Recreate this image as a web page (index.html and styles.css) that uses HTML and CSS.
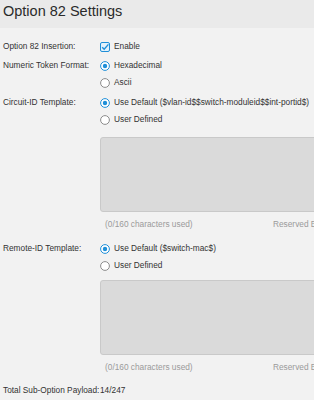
FILE: index.html
```html
<!DOCTYPE html>
<html lang="en">
<head>
  <meta charset="UTF-8" />
  <meta name="viewport" content="width=device-width, initial-scale=1.0"/>
  <title>Option 82 Settings</title>
  <link rel="stylesheet" href="styles.css">
</head>
<body>
  <header class="page-head">
    <h1>Option 82 Settings</h1>
  </header>

  <main class="form">
    <div class="row row-first">
      <span class="label">Option 82 Insertion:</span>
      <div class="ctrl">
        <label class="opt">
          <svg class="box" viewBox="0 0 10 10"><rect x="0.5" y="0.5" width="9" height="9" rx="1.5" fill="#e3f1fb" stroke="#1f8fd8"/><path d="M2.2 5.2 L4.2 7.2 L8.4 2.4" fill="none" stroke="#1f8fd8" stroke-width="1.4"/></svg>
          Enable
        </label>
      </div>
    </div>

    <div class="row">
      <span class="label">Numeric Token Format:</span>
      <div class="ctrl">
        <label class="opt">
          <svg class="radio" viewBox="0 0 10 10"><circle cx="5" cy="5" r="4.4" fill="#fff" stroke="#1f8fd8"/><circle cx="5" cy="5" r="2.2" fill="#1f8fd8"/></svg>
          Hexadecimal
        </label>
        <label class="opt">
          <svg class="radio" viewBox="0 0 10 10"><circle cx="5" cy="5" r="4.4" fill="#fff" stroke="#8c8c8c"/></svg>
          Ascii
        </label>
      </div>
    </div>

    <div class="row row-gap">
      <span class="label">Circuit-ID Template:</span>
      <div class="ctrl">
        <label class="opt">
          <svg class="radio" viewBox="0 0 10 10"><circle cx="5" cy="5" r="4.4" fill="#fff" stroke="#1f8fd8"/><circle cx="5" cy="5" r="2.2" fill="#1f8fd8"/></svg>
          Use Default ($vlan-id$$switch-moduleid$$int-portid$)
        </label>
        <label class="opt">
          <svg class="radio" viewBox="0 0 10 10"><circle cx="5" cy="5" r="4.4" fill="#fff" stroke="#8c8c8c"/></svg>
          User Defined
        </label>
        <div class="template">
          <div class="area"></div>
          <div class="area-foot">
            <span class="count">(0/160 characters used)</span>
            <span>Reserved Bytes: 0</span>
          </div>
        </div>
      </div>
    </div>

    <div class="row row-remote">
      <span class="label">Remote-ID Template:</span>
      <div class="ctrl">
        <label class="opt">
          <svg class="radio" viewBox="0 0 10 10"><circle cx="5" cy="5" r="4.4" fill="#fff" stroke="#1f8fd8"/><circle cx="5" cy="5" r="2.2" fill="#1f8fd8"/></svg>
          Use Default ($switch-mac$)
        </label>
        <label class="opt">
          <svg class="radio" viewBox="0 0 10 10"><circle cx="5" cy="5" r="4.4" fill="#fff" stroke="#8c8c8c"/></svg>
          User Defined
        </label>
        <div class="template template-2">
          <div class="area"></div>
          <div class="area-foot">
            <span class="count">(0/160 characters used)</span>
            <span>Reserved Bytes: 0</span>
          </div>
        </div>
      </div>
    </div>

    <div class="row row-total">
      <span class="label">Total Sub-Option Payload:</span>
      <div class="ctrl">14/247</div>
    </div>
  </main>
</body>
</html>
```

FILE: styles.css
```css
html, body {
  margin: 0;
  padding: 0;
  overflow: hidden;
  background-color: #f2f2f2;
  font-family: 'Liberation Sans', Arial, sans-serif;
  color: #333;
}

.page-head {
  background-color: #eaeaea;
  height: 28px;
  padding-left: 3px;
}

.page-head h1 {
  margin: 0;
  font-size: 14.5px;
  font-weight: normal;
  line-height: 22px;
  color: #2a2a2a;
}

.form {
  font-size: 8.3px;
  padding-left: 3px;
  padding-top: 10px;
}

.row {
  display: grid;
  grid-template-columns: 97px auto;
  line-height: 17px;
  margin-top: 2px;
}

.row-first {
  margin-top: 0;
}

.row-gap {
  margin-top: 3px;
}

.row-remote {
  margin-top: 7px;
}

.label {
  white-space: nowrap;
}

.ctrl {
  white-space: nowrap;
}

.opt {
  display: flex;
  align-items: center;
  gap: 4px;
  height: 17px;
}

.box, .radio {
  width: 10px;
  height: 10px;
  flex: none;
}

.template {
  margin-top: 9px;
}

.template-2 {
  margin-top: 6px;
}

.area {
  width: 240px;
  height: 73px;
  background-color: #dadada;
  border: 1px solid #c9c9c9;
  border-radius: 3px;
}

.area-foot {
  display: flex;
  color: #9a9a9a;
  padding-left: 5px;
  margin-top: 4px;
}

.count {
  width: 168px;
}

.row-total {
  margin-top: 6px;
}
```
